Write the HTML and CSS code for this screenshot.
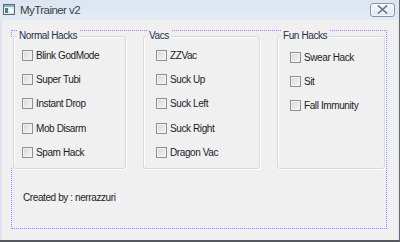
FILE: index.html
```html
<!DOCTYPE html>
<html>
<head>
<meta charset="utf-8">
<link rel="stylesheet" href="styles.css">
</head>
<body>
<div class="window">
  <div class="titlebar">
    <svg class="app-icon" width="12" height="11" viewBox="0 0 12 11">
      <rect x="0.5" y="0.5" width="11" height="10" fill="#eef3f7" stroke="#5a6672"/>
      <rect x="1" y="1" width="10" height="2" fill="#8fb0d0"/>
      <rect x="2" y="4" width="3" height="5" fill="#3d8f5a"/>
      <rect x="6" y="4" width="4" height="5" fill="#ffffff" stroke="#b9c4cf" stroke-width="0.5"/>
    </svg>
    <span class="title">MyTrainer v2</span>
    <span class="close">
      <svg width="11" height="9" viewBox="0 0 11 9">
        <path d="M1.5 1 L9.5 8 M9.5 1 L1.5 8" stroke="#ffffff" stroke-width="3.4" stroke-linecap="square"/>
        <path d="M1.5 1 L9.5 8 M9.5 1 L1.5 8" stroke="#737c87" stroke-width="1.8" stroke-linecap="square"/>
      </svg>
    </span>
  </div>
  <div class="client">
    <div class="panel">
      <div class="groups">
        <fieldset class="group g1">
          <legend>Normal Hacks</legend>
          <ul class="checks">
            <li><span class="box"></span>Blink GodMode</li>
            <li><span class="box"></span>Super Tubi</li>
            <li><span class="box"></span>Instant Drop</li>
            <li><span class="box"></span>Mob Disarm</li>
            <li><span class="box"></span>Spam Hack</li>
          </ul>
        </fieldset>
        <fieldset class="group g2">
          <legend>Vacs</legend>
          <ul class="checks">
            <li><span class="box"></span>ZZVac</li>
            <li><span class="box"></span>Suck Up</li>
            <li><span class="box"></span>Suck Left</li>
            <li><span class="box"></span>Suck Right</li>
            <li><span class="box"></span>Dragon Vac</li>
          </ul>
        </fieldset>
        <fieldset class="group g3">
          <legend>Fun Hacks</legend>
          <ul class="checks">
            <li><span class="box"></span>Swear Hack</li>
            <li><span class="box"></span>Sit</li>
            <li><span class="box"></span>Fall Immunity</li>
          </ul>
        </fieldset>
      </div>
      <p class="credit">Created by : nerrazzuri</p>
    </div>
  </div>
</div>
</body>
</html>
```
FILE: styles.css
```css
* { box-sizing: border-box; }
html, body { margin: 0; padding: 0; }
body { width: 400px; height: 242px; overflow: hidden; background: #dce5ef; }

.window {
  width: 400px;
  height: 242px;
  display: flex;
  flex-direction: column;
  background: #dce5ef;
  border-right: 1px solid #646b73;
  border-bottom: 2px solid #54595f;
}

.titlebar {
  height: 20px;
  flex: none;
  display: flex;
  align-items: center;
  padding-left: 3px;
  background: linear-gradient(#dbe5f0, #e4ebf3);
}
.app-icon { display: block; margin-top: -1px; }
.title {
  margin-left: 5px;
  font-family: "Liberation Sans", Arial, sans-serif;
  font-size: 11.5px;
  letter-spacing: -0.55px;
  color: #3a3f45;
  margin-top: -1px;
}
.close {
  margin-left: auto;
  margin-right: 4px;
  width: 25px;
  height: 14px;
  margin-top: -1px;
  border: 1px solid #8b95a1;
  border-radius: 3px;
  background: linear-gradient(#f4f7fa, #dfe6ee);
  box-shadow: inset 0 0 0 1px rgba(255,255,255,0.7);
  display: flex;
  align-items: center;
  justify-content: center;
}
.close svg { display: block; }

.client {
  flex: 1;
  margin: 0 1px 0 2px;
  background: #f0f0f0;
  padding: 10px 0 0 9px;
}

.panel {
  width: 376px;
  height: 199px;
  border: 1px dotted #8a8cff;
  padding: 0;
}

.groups {
  display: flex;
  margin-top: -2px;
  margin-left: 1px;
  gap: 17px;
}

.group {
  margin: 0;
  padding: 0 0 0 8px;
  height: 140px;
  border: 1px solid #d3dadd;
  border-radius: 3px;
  background: #f0f0f0;
  box-shadow: 1px 1px 0 #ffffff, inset 1px 1px 0 #ffffff;
  min-width: 0;
}
.g1 { width: 113px; box-shadow: -2px 0 0 #f0f0f0, 1px 1px 0 #ffffff, inset 1px 1px 0 #ffffff; }
.g2 { width: 117px; padding-left: 12px; }
.g3 { width: 108px; padding-left: 12px; }
.g3 .checks { padding-top: 2px; }

legend {
  font-family: "Liberation Sans", Arial, sans-serif;
  font-size: 10px;
  letter-spacing: -0.4px;
  line-height: 14px;
  color: #23304a;
  padding: 0 2px;
  margin-left: -5px;
  background: #f0f0f0;
}
.g2 legend, .g3 legend { margin-left: -9px; }

.checks {
  list-style: none;
  margin: 0;
  padding: 0;
}
.checks li {
  height: 24.3px;
  display: flex;
  align-items: center;
  gap: 3px;
  font-family: "Liberation Sans", Arial, sans-serif;
  font-size: 10px;
  letter-spacing: -0.4px;
  color: #1c1c24;
  white-space: nowrap;
}
.box {
  width: 11px;
  height: 11px;
  flex: none;
  border: 1px solid #8f9090;
  background: linear-gradient(135deg, #d8d8d8, #f7f7f7);
  box-shadow: inset 0 0 0 1px #f2f2f2;
}

.credit {
  margin: 22px 0 0 11px;
  font-family: "Liberation Sans", Arial, sans-serif;
  font-size: 10px;
  letter-spacing: -0.4px;
  line-height: 14px;
  color: #1c1c24;
}
```
